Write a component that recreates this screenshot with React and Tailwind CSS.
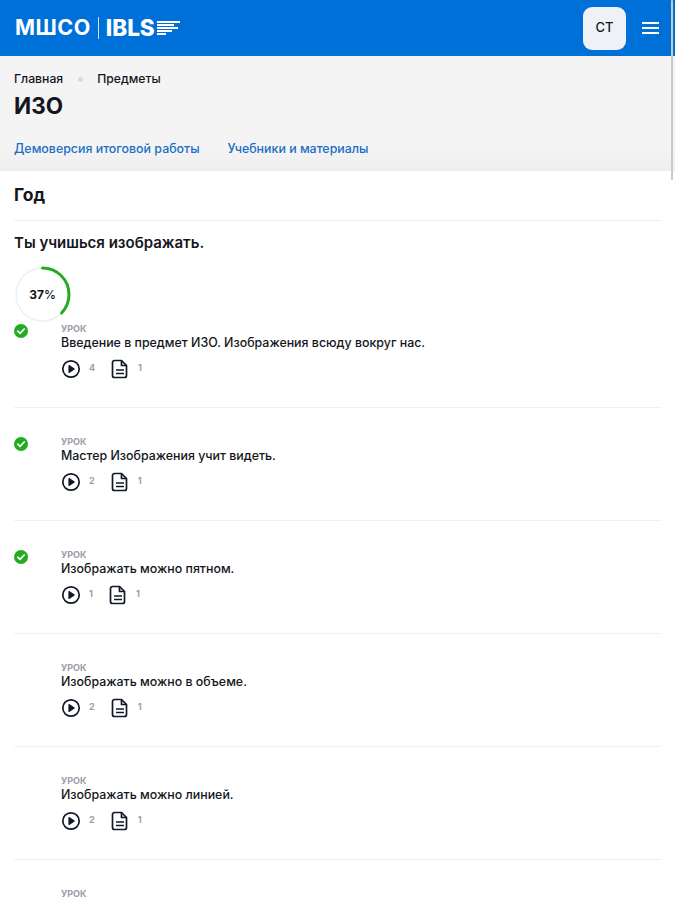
import React from "react";

const LESSONS = [
  { title: "Введение в предмет ИЗО. Изображения всюду вокруг нас.", videos: 4, docs: 1, done: true },
  { title: "Мастер Изображения учит видеть.", videos: 2, docs: 1, done: true },
  { title: "Изображать можно пятном.", videos: 1, docs: 1, done: true },
  { title: "Изображать можно в объеме.", videos: 2, docs: 1, done: false },
  { title: "Изображать можно линией.", videos: 2, docs: 1, done: false },
  { title: "", videos: 0, docs: 0, done: false },
];

function Logo() {
  return (
    <div className="flex items-center font-['Inter',sans-serif] text-white">
      <span className="text-[21.5px] leading-none font-bold tracking-[0.5px]">МШСО</span>
      <span className="mx-[7px] h-[22px] w-px bg-white/80" />
      <span className="text-[22.5px] leading-none font-extrabold">IBLS</span>
      <svg width="23" height="14" viewBox="0 0 23 14" className="ml-[2px]">
        <g fill="#fff">
          <rect x="0" y="0" width="23" height="2" />
          <rect x="0" y="3" width="17" height="2" />
          <rect x="0" y="6" width="21" height="2" />
          <rect x="0" y="9" width="15" height="2" />
          <rect x="0" y="12" width="9" height="2" />
        </g>
      </svg>
    </div>
  );
}

function PlayIcon() {
  return (
    <svg width="20" height="20" viewBox="0 0 20 20" fill="none" stroke="#111827" strokeWidth="1.7">
      <circle cx="10" cy="10" r="8.2" />
      <path d="M8 6.6 13.2 10 8 13.4Z" fill="#111827" strokeLinejoin="round" strokeWidth="1.2" />
    </svg>
  );
}

function DocIcon() {
  return (
    <svg width="18" height="20" viewBox="0 0 18 20" fill="none" stroke="#111827" strokeWidth="1.7" strokeLinejoin="round">
      <path d="M3.5 1.5h7l5 5v10a2 2 0 0 1-2 2h-10a2 2 0 0 1-2-2v-13a2 2 0 0 1 2-2Z" />
      <path d="M10.5 1.5v5h5" />
      <path d="M5 11h8M5 14.5h8" />
    </svg>
  );
}

function CheckBadge() {
  return (
    <svg width="14" height="14" viewBox="0 0 14 14" className="absolute left-0 top-px">
      <circle cx="7" cy="7" r="7" fill="#22ac1f" />
      <path d="M3.8 7.2 6 9.3 10.2 5" fill="none" stroke="#fff" strokeWidth="1.7" strokeLinecap="round" strokeLinejoin="round" />
    </svg>
  );
}

function LessonRow({ lesson }) {
  return (
    <div className="relative mb-[28px] h-[85px] border-b border-[#f0f1f3] pl-[47px]">
      {lesson.done && <CheckBadge />}
      <div className="h-[11px] text-[9px] leading-[11px] font-bold text-[#9a9ea6]">УРОК</div>
      {lesson.title && (
        <>
          <div className="-mt-px h-[20px] text-[12.4px] leading-[20px] font-medium text-[#14161c]">{lesson.title}</div>
          <div className="mt-[6px] flex items-center">
            <PlayIcon />
            <span className="ml-[8px] mr-[16px] -translate-y-px text-[9px] font-bold text-[#9a9ea6]">{lesson.videos}</span>
            <DocIcon />
            <span className="ml-[9px] -translate-y-px text-[9px] font-bold text-[#9a9ea6]">{lesson.docs}</span>
          </div>
        </>
      )}
    </div>
  );
}

export default function App() {
  return (
    <div className="relative h-[900px] w-[675px] overflow-hidden bg-white font-['Inter',sans-serif] text-[#14161c]">
      <header className="flex h-[56px] items-center justify-between bg-[#0070d9] pl-[15px] pr-[16px]">
        <Logo />
        <div className="flex items-center gap-[16px]">
          <div className="flex h-[43px] w-[43px] items-center justify-center rounded-[9px] bg-[#eef1f5] text-[13px] font-medium">СТ</div>
          <div className="flex w-[17px] flex-col gap-[3px]">
            <span className="h-[2px] bg-white" />
            <span className="h-[2px] bg-white" />
            <span className="h-[2px] bg-white" />
          </div>
        </div>
      </header>

      <section className="h-[115px] bg-gradient-to-b from-[#f4f4f5] from-80% to-[#eeeeef] px-[14px] pt-[16px]">
        <div className="flex h-[15px] items-center text-[12.2px] font-medium">
          <span>Главная</span>
          <span className="ml-[15px] mr-[14px] h-[5px] w-[5px] rounded-full bg-[#d8d9dc]" />
          <span>Предметы</span>
        </div>
        <h1 className="mt-[6px] text-[22.5px] leading-[26px] font-bold">ИЗО</h1>
        <div className="mt-[22px] flex gap-[28px] text-[12.4px] leading-[16px] font-medium text-[#1a6fc4]">
          <span>Демоверсия итоговой работы</span>
          <span>Учебники и материалы</span>
        </div>
      </section>

      <main className="px-[14px]">
        <div className="flex h-[50px] items-center border-b border-[#f0f1f3] text-[17.5px] font-bold">Год</div>
        <h2 className="mt-[13px] h-[18px] text-[15px] leading-[18px] font-semibold">Ты учишься изображать.</h2>
        <div className="relative mt-[14px] h-[57px] w-[57px]">
          <svg width="57" height="57" viewBox="0 0 57 57" className="-rotate-90">
            <circle cx="28.5" cy="28.5" r="26.5" fill="none" stroke="#eeeff1" strokeWidth="1.5" />
            <circle cx="28.5" cy="28.5" r="26.5" fill="none" stroke="#22ac1f" strokeWidth="3" strokeLinecap="round" strokeDasharray="61.6 166.5" />
          </svg>
          <span className="absolute inset-0 flex items-center justify-center text-[12px] font-bold">
            37<span className="font-medium">%</span>
          </span>
        </div>
        <div>
          {LESSONS.map((lesson, i) => (
            <LessonRow key={i} lesson={lesson} />
          ))}
        </div>
      </main>

      <div className="absolute right-[2px] top-0 h-[180px] w-[2px] rounded-full bg-[#c9cacc]" />
    </div>
  );
}
